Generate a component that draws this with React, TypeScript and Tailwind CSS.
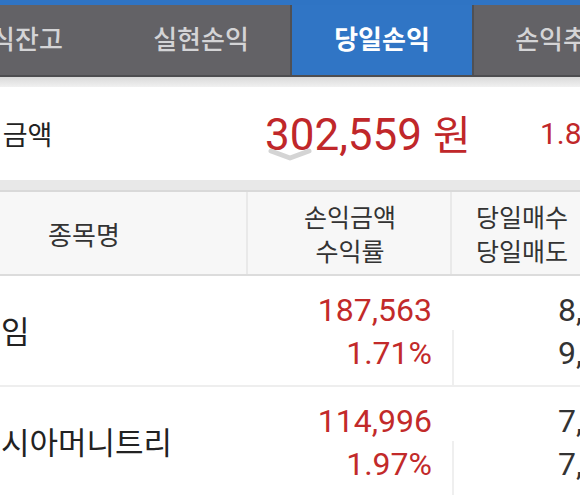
import React from "react";

const KR = "font-['Roboto','Noto_Sans_CJK_KR',sans-serif]";

function Tab({ label, active, className = "" }: { label: string; active?: boolean; className?: string }) {
  return (
    <div
      className={`w-[180px] shrink-0 h-full flex items-center justify-center text-[26px] ${
        active ? "bg-[#3075c5] text-white font-semibold" : "bg-[#636266] text-[#d4d4d6] font-medium"
      } ${className}`}
    >
      {label}
    </div>
  );
}

function DataRow({
  name,
  amount,
  rate,
  buy,
  sell,
}: {
  name: string;
  amount: string;
  rate: string;
  buy: string;
  sell: string;
}) {
  return (
    <div className="flex h-[111px] border-b-2 border-[#eeeeee] bg-white shrink-0">
      <div className="w-[326px] shrink-0 flex items-center pl-[79px] text-[31px] text-[#222] font-['Noto_Sans_CJK_KR',sans-serif]">
        {name}
      </div>
      <div className="w-[204px] shrink-0 flex flex-col text-[32px] leading-[36px] text-[#c22a2a] font-['Roboto',sans-serif]">
        <div className="h-[54px] pt-[16px] pr-[20px] text-right">{amount}</div>
        <div className="h-[55px] pt-[5px] pr-[20px] text-right">{rate}</div>
      </div>
      <div className="flex-1 flex flex-col text-[32px] leading-[36px] text-[#333] font-['Roboto',sans-serif] whitespace-nowrap">
        <div className="h-[54px] pt-[16px] pl-[106px]">{buy}</div>
        <div className="h-[55px] pt-[5px] pl-[104px] border-l-2 border-[#efefef]">{sell}</div>
      </div>
    </div>
  );
}

export default function App() {
  return (
    <div className={`w-[580px] h-[495px] overflow-hidden bg-white flex flex-col ${KR}`}>
      {/* top blue strip */}
      <div className="h-[5px] bg-[#2f74c4] shrink-0" />
      {/* tabs */}
      <div className="h-[70px] shrink-0 flex -ml-[68px] whitespace-nowrap">
        <Tab label="주식잔고" className="pr-[14px]" />
        <Tab label="실현손익" className="border-r-2 border-[#505053]" />
        <Tab label="당일손익" active />
        <Tab label="손익추이" className="border-l-2 border-[#505053]" />
      </div>
      <div className="h-[2px] bg-[#4d4d50] shrink-0" />
      <div className="h-[10px] shrink-0 bg-gradient-to-b from-[#d9d9d9] to-[#f1f1f1]" />

      {/* summary */}
      <div className="h-[93px] shrink-0 flex items-center whitespace-nowrap bg-white">
        <span className="w-[312px] shrink-0 -ml-[47px] text-[27px] text-[#222] font-['Noto_Sans_CJK_KR',sans-serif] pt-[2px]">
          손익금액
        </span>
        <div className="w-[275px] shrink-0 relative">
          <span className="text-[44px] leading-[52px] text-[#c0272a] font-['Roboto',sans-serif]">
            302,559 <span className="font-['Noto_Sans_CJK_KR',sans-serif] text-[41px]">원</span>
          </span>
          <svg
            className="absolute left-[3px] top-[42px]"
            width="44"
            height="14"
            viewBox="0 0 44 14"
          >
            <polyline
              points="3,3 22,10 41,3"
              fill="none"
              stroke="#d4d4d4"
              strokeWidth="5"
              strokeLinecap="round"
              strokeLinejoin="round"
            />
          </svg>
        </div>
        <span className="text-[30px] text-[#c0272a] font-['Roboto',sans-serif]">1.81%</span>
      </div>

      {/* gray band */}
      <div className="h-[10px] shrink-0 bg-[#e8e8e8]" />
      <div className="h-[2px] shrink-0 bg-[#d9d9d9]" />

      {/* table */}
      <div className="-ml-[78px] w-[800px] flex flex-col">
        {/* header */}
        <div className="h-[84px] shrink-0 flex bg-[#f7f7f7] border-b-2 border-[#dcdcdc] text-[25px] text-[#333] font-['Noto_Sans_CJK_KR',sans-serif] whitespace-nowrap">
          <div className="w-[326px] shrink-0 flex items-center justify-center border-r-2 border-[#e9e9e9] text-[26px]">
            종목명
          </div>
          <div className="w-[204px] shrink-0 flex flex-col items-center justify-center border-r-2 border-[#e9e9e9] pl-[2px] leading-[34px]">
            <span>손익금액</span>
            <span>수익률</span>
          </div>
          <div className="w-[140px] shrink-0 flex flex-col items-center justify-center leading-[34px]">
            <span>당일매수</span>
            <span>당일매도</span>
          </div>
        </div>
        <DataRow name="임" amount="187,563" rate="1.71%" buy="8,730,000" sell="9,050,000" />
        <DataRow name="시아머니트리" amount="114,996" rate="1.97%" buy="7,480,000" sell="7,380,000" />
      </div>
    </div>
  );
}
